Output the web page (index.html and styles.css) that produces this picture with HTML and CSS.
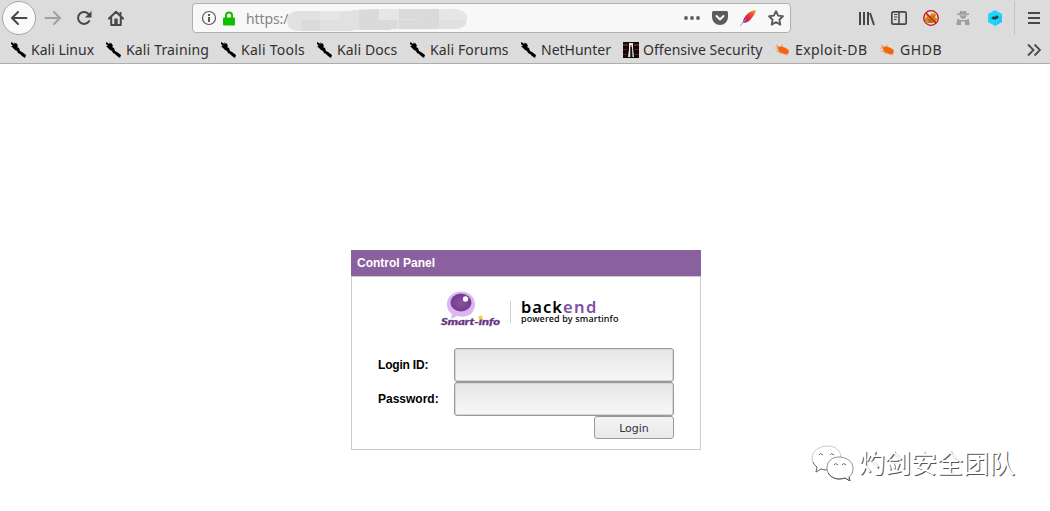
FILE: index.html
```html
<!DOCTYPE html>
<html lang="en">
<head>
<meta charset="utf-8">
<title>Control Panel</title>
<link rel="stylesheet" href="styles.css">
</head>
<body>
<svg class="defs" width="0" height="0">
  <symbol id="kali" viewBox="0 0 16 16"><path d="M1 0 3 1 4 2 7 2 8 4 7 5 9 6 10 9 12 10 16 13 15 16 12 14 10 12 8 11 7 9 5 8 3 6 1 4 3 4 1 2Z" fill="#000"/><path d="M4 1l3 1" stroke="#000" stroke-width=".8"/></symbol>
  <symbol id="bug" viewBox="0 0 16 16"><path d="M3 4 6 5 7 4 9 5 12 6 15 9 14 12 10 12 5 10 4 7Z" fill="#f2640d"/><path d="M1 6h4M2 9l4 0M5 11l3 0M10 12l4 1M7 4l2-1M13 7l2 1M4 4 2 3" stroke="#f4894d" stroke-width=".8"/></symbol>
</svg>
<header class="browser">
  <div class="toolbar">
    <button class="back"><svg width="18" height="16" viewBox="0 0 18 16"><path d="M16.500 8H2M8 2 2 8l6 6" class="ink"/></svg></button>
    <svg class="forward" width="18" height="16" viewBox="0 0 18 16"><path d="M1.500 8H16M10 2l6 6-6 6" class="ink faded"/></svg>
    <svg class="reload" width="16" height="16" viewBox="0 0 16 16"><path d="M13 4.500A6 6 0 1 0 13.200 11" class="ink"/><path d="M15.500 1v6.500H9Z" fill="#474747"/></svg>
    <svg class="home" width="16" height="16" viewBox="0 0 16 16"><path d="M1 8.500 8 1.700l7 6.800M3.200 8v7h9.600V8" class="ink" stroke-linejoin="round"/><path d="M6.300 15V9.500q0-1 1-1h1.400q1 0 1 1V15Z" fill="#474747"/><path d="M11.500 2h2v3.500h-2z" fill="#474747"/></svg>
    <div class="urlbar">
      <svg class="info" width="16" height="16" viewBox="0 0 16 16"><circle cx="8" cy="8" r="6.500" fill="none" stroke="#5b5b5b" stroke-width="1.200"/><path d="M7 7h2v5H7zM7 4h2v2H7z" fill="#5b5b5b"/></svg>
      <svg class="lock" width="12" height="15" viewBox="0 0 12 15"><path d="M3 8V4.500a3 3 0 0 1 6 0V8" fill="none" stroke="#12bc00" stroke-width="2"/><rect y="6.500" width="12" height="8" rx="1" fill="#12bc00"/></svg>
      <span class="scheme">https:/</span>
      <svg class="redacted" width="180" height="24" viewBox="0 0 180 24"><defs><clipPath id="blob"><path d="M11 3 64 3 64 2 100 1H165q15 0 15 10t-14 10H104v1H66v1H11Q0 22 0 13T11 3"/></clipPath></defs><g clip-path="url(#blob)"><path fill="#e1e1e1" d="M0 0h180v24H0z"/><path fill="#dadada" d="M72 0h20v12H72zM110 0h22v11h-22zM132 0h20v12h-20zM112 12h20v12h-20zM15 12h18v12H15zM72 12h38v12H72zM132 12h20v12h-20z"/><path fill="#e6e6e6" d="M92 0h20v12H92zM33 0h20v12H33zM152 0h28v12h-28z"/></g></svg>
      <svg class="dots" width="16" height="16" viewBox="0 0 16 16"><g fill="#5c5c5c"><circle cx="2" cy="8" r="1.900"/><circle cx="8" cy="8" r="1.900"/><circle cx="14" cy="8" r="1.900"/></g></svg>
      <svg width="16" height="16" viewBox="0 0 16 16"><path d="M1.500 1h13Q16 1 16 2.500V7A8 8 0 0 1 0 7V2.500Q0 1 1.500 1Z" fill="#5c5c5c"/><path d="m4.500 6 3.500 3.500L11.500 6" fill="none" stroke="#f8f8f8" stroke-width="2" stroke-linecap="round" stroke-linejoin="round"/></svg>
      <svg width="16" height="16" viewBox="0 0 16 16"><defs><linearGradient id="plume" x1="1" y1="0" x2="0" y2="1"><stop stop-color="#f9b021"/><stop offset=".3" stop-color="#ee582f"/><stop offset=".65" stop-color="#d6204b"/><stop offset="1" stop-color="#82348c"/></linearGradient></defs><path d="M16 0Q9 1 5.500 6 3 9 2.500 13 8 13 11 9L14 5Q16 2 16 0Z" fill="url(#plume)"/><path d="M0 16 6 9" stroke="#b690c5"/></svg>
      <svg width="16" height="16" viewBox="0 0 16 16"><path d="m8 1.200 2.100 4.400 4.800.7-3.500 3.400.9 4.900L8 12.200l-4.300 2.400.9-4.900L1.100 6.300l4.800-.7Z" fill="none" stroke="#5c5c5c" stroke-width="1.900" stroke-linejoin="round"/></svg>
    </div>
    <div class="tools">
      <svg width="16" height="16" viewBox="0 0 16 16"><path d="M1 2v13M5 2v13M9 2v13M11 3l4 12" fill="none" stroke="#474747" stroke-width="2"/></svg>
      <svg width="16" height="16" viewBox="0 0 16 16"><rect x=".8" y="1.800" width="14.400" height="12.400" rx="1.700" fill="none" stroke="#474747" stroke-width="1.700"/><path d="M8 2v12" stroke="#474747" stroke-width="1.500"/><path d="M3 4.500h3.500M3 7h3.500M3 9.500h2.500" stroke="#474747"/></svg>
      <svg width="16" height="16" viewBox="0 0 16 16"><path d="M3 5 5 4l1 2 2-1V3l2 1 2-1 1 2-1 2 2 2-1 3-3 1H5L2 11V8l2-1Z" fill="#d98313"/><path d="m5 9 2 2 1-2m2-3 1 1M5 12h5" fill="none" stroke="#784b18" stroke-width=".7"/><circle cx="8" cy="8" r="7.300" fill="none" stroke="#c70e18" stroke-width="1.300"/><path d="m3 3 10 10" stroke="#c70e18" stroke-width="1.300"/></svg>
      <svg width="16" height="16" viewBox="0 0 16 16"><path d="M5 1h2l1 .7L9 1h2l.5 2.500H14V5h-2.500q0 3-3.500 4-3-1-3.500-4H2V3.500h2.500ZM2 9l4 1v2H2ZM14 9l-4 1v2h4ZM1.500 12H6V15H1.500ZM10 12h4.500V15H10ZM6 10h4v1.500H6Z" fill="#9e9e9e"/><path d="M5.500 5h5" stroke="#dcdcdc" stroke-width=".8"/></svg>
      <svg width="16" height="16" viewBox="0 0 16 16"><path d="m8 0 7 4v8l-7 4-7-4V4Z" fill="#1fd6f8"/><path d="m15 4-7 12 7-4Z" fill="#1cbdf4" opacity=".5"/><path d="M4 8 7 6v1l2-1V5l3 2-2 2H9v1L7 9v1Z" fill="#29434c"/></svg>
      <i class="divider"></i>
      <svg width="12" height="14" viewBox="0 0 12 14"><path d="M0 2h12M0 7h12M0 12h12" stroke="#474747" stroke-width="2"/></svg>
    </div>
  </div>
  <nav class="bookmarks">
    <a class="mark linux"><svg><use href="#kali"/></svg><span>Kali Linux</span></a>
    <a class="mark training"><svg><use href="#kali"/></svg><span>Kali Training</span></a>
    <a class="mark ktools"><svg><use href="#kali"/></svg><span>Kali Tools</span></a>
    <a class="mark docs"><svg><use href="#kali"/></svg><span>Kali Docs</span></a>
    <a class="mark forums"><svg><use href="#kali"/></svg><span>Kali Forums</span></a>
    <a class="mark hunter"><svg><use href="#kali"/></svg><span>NetHunter</span></a>
    <a class="mark offensive"><svg viewBox="0 0 16 16"><path d="M0 0h16v16H0z" fill="#160808"/><path d="M0 2h5v2H0zM11 2h5v2h-5zM0 7h4v1H0zM12 7h4v1h-4zM0 12h4v1H0zM12 12h4v1h-4z" fill="#542626"/><path d="M6 1h4v5l1 9H9.500L9 5H7.500v10H5l1-8Z" fill="#e8e8e8"/><path d="M7.500 3h1v12h-1z" fill="#222"/></svg><span>Offensive Security</span></a>
    <a class="mark exploit"><svg><use href="#bug"/></svg><span>Exploit-DB</span></a>
    <a class="mark ghdb"><svg><use href="#bug"/></svg><span>GHDB</span></a>
    <svg class="more" width="14" height="14" viewBox="0 0 14 14"><path d="m1 1.500 5.500 5.500L1 12.500M7.500 1.500 13 7l-5.500 5.500" fill="none" stroke="#4c4c4c" stroke-width="1.900"/></svg>
  </nav>
</header>
<main>
  <section class="panel">
    <h1>Control Panel</h1>
    <form class="content" onsubmit="return false">
      <div class="brand">
        <svg class="logo" width="62" height="38" viewBox="0 0 62 38"><defs><radialGradient id="eye"><stop stop-color="#8c51a0"/><stop offset="1" stop-color="#713d8b"/></radialGradient></defs><path d="M21 .5C13 .5 7 6 7 13c0 5 2 8 5 10l-1 5 6-3c11 3 18-3 18-12C35 6 29 .5 21 .5Z" fill="#dcb5f4"/><ellipse cx="21" cy="11.500" rx="10.500" ry="9" fill="url(#eye)"/><circle cx="25.500" cy="8" r="2.700" fill="#fff"/><text x="1" y="34" textLength="59" lengthAdjust="spacingAndGlyphs">Smart-info</text><circle cx="40.500" cy="26.500" r="2" fill="#f5d51d"/></svg>
        <i class="rule"></i>
        <div class="wordmark"><strong>back<em>end</em></strong><span>powered by smartinfo</span></div>
      </div>
      <label class="field"><span class="id">Login ID:</span><input type="text"></label>
      <label class="field"><span>Password:</span><input type="password"></label>
      <button class="login">Login</button>
    </form>
  </section>
  <div class="watermark">
    <svg width="44" height="38" viewBox="0 0 44 38"><g fill="#fff" stroke="#777" stroke-width=".8"><path d="M17 3C8 3 1 8 1 15c0 4 2 7 5 9l-1 5 5-3q5 2 11 0c6-1 9-5 9-11C30 8 25 3 17 3Z" stroke="#bbb"/><path d="M2 19q1 3 4 5l-1 5 5-3q3 1 6 1" fill="none" stroke="#555"/><path d="M28 14c-8 0-12 5-12 11s5 11 12 11q3 0 6-1l5 3-1-4c3-2 4-5 4-9 0-6-6-11-14-11Z"/><path d="M8 12q1-3 4 0M19 12q1-3 4 0M23 22q1-3 4 0M31 22q1-3 4 0M17 30q4 6 11 6 3 0 6-1l5 3-1-4" fill="none" stroke="#444"/></g></svg>
    <span>灼剑安全团队</span>
  </div>
</main>
</body>
</html>
```

FILE: styles.css
```css
* { box-sizing: border-box; }
body { margin: 0; width: 1050px; height: 511px; overflow: hidden; background: #fff; font-family: "Noto Sans", sans-serif; }
svg { display: block; flex: none; }
.defs { position: absolute; }
.browser { height: 64px; background: #dcdcdc; border-bottom: 1px solid #adadad; }
.toolbar { display: flex; align-items: center; height: 36px; padding-left: 2px; }
.ink { fill: none; stroke: #474747; stroke-width: 2; stroke-linecap: round; }
.faded { stroke: #a0a0a0; }
.back { display: grid; place-items: center; width: 34px; height: 34px; padding: 0; border: 1px solid #a5a5a5; border-radius: 50%; background: #fafafa; }
.forward { margin-left: 8px; }
.reload { margin-left: 14px; }
.home { margin-left: 16px; }
.urlbar { display: flex; align-items: center; width: 599px; height: 30px; margin-left: 68px; padding: 0 6px 0 8px; gap: 12px; background: #f8f8f8; border: 1px solid #b0b0b0; border-radius: 4px; }
.lock { margin-left: -6px; }
.scheme { width: 42px; margin-left: -1px; color: #858585; font-size: 14px; letter-spacing: -.1px; }
.redacted { margin: 3px 0 0 -13px; }
.dots { margin-left: auto; }
.tools { display: flex; align-items: center; gap: 16px; margin-left: 68px; }
.divider { width: 1px; height: 34px; margin: 0 -3px 0 -5px; background: #c2c2c2; }
.bookmarks { display: flex; align-items: center; height: 27px; padding: 0 9px 0 10px; color: #303030; font-size: 14px; }
.mark { display: flex; flex: none; align-items: center; gap: 5px; white-space: nowrap; }
.mark svg { width: 16px; height: 16px; }
.linux { width: 95px; }
.training { width: 115px; letter-spacing: .16px; }
.ktools { width: 96px; letter-spacing: .25px; }
.docs { width: 93px; letter-spacing: .1px; }
.forums { width: 111px; letter-spacing: .12px; }
.hunter { width: 103px; }
.offensive { width: 151px; gap: 4px; letter-spacing: .05px; }
.exploit { width: 105px; letter-spacing: .4px; }
.ghdb { letter-spacing: .6px; }
.more { margin-left: auto; }
main { position: relative; height: 447px; padding: 186px 0 0 351px; }
.panel { width: 350px; height: 200px; font-family: "Liberation Sans", Arial, sans-serif; }
.panel h1 { height: 26px; margin: 0; padding-left: 6px; background: #8b609f; color: #fff; font-size: 12px; line-height: 26px; }
.content { display: flex; flex-direction: column; height: 174px; padding: 0 26px; border: 1px solid #ccc; }
.brand { display: flex; height: 71px; padding: 14px 0 0 62px; }
.logo text { fill: #69347f; stroke: #69347f; stroke-width: .3px; font: italic 900 10px Lato, sans-serif; }
.rule { width: 1px; height: 22px; margin: 10px 10px 0 8px; background: #d0d0d0; }
.wordmark { display: flex; flex-direction: column; padding-top: 8px; font-family: "Noto Sans", sans-serif; white-space: nowrap; }
.wordmark strong { height: 15px; font-size: 16.5px; font-weight: 600; line-height: 15px; letter-spacing: 1px; color: #000; }
.wordmark em { color: #8050a0; font-style: normal; font-weight: 600; letter-spacing: 1.4px; }
.wordmark span { color: #000; font-size: 9px; font-weight: 500; line-height: 10px; letter-spacing: .15px; }
.field { display: flex; align-items: center; height: 34px; }
.field span { width: 76px; font-size: 12px; font-weight: bold; color: #000; }
.field .id { letter-spacing: -.2px; }
.field input { width: 220px; height: 34px; border: 1px solid #999; border-radius: 3px; background: linear-gradient(#e6e6e6, #f7f7f7); box-shadow: inset 0 0 0 1px #d7d7d7; }
.login { align-self: flex-end; width: 80px; height: 23px; padding: 1px 0 0; border: 1px solid #999; border-radius: 3px; background: linear-gradient(#f4f4f4, #e9e9e9); color: #333; font: 11px "DejaVu Sans", sans-serif; }
.watermark { position: absolute; left: 811px; top: 379px; display: flex; align-items: center; gap: 4px; color: #fff; font: 26px/36px "Noto Sans CJK SC", sans-serif; text-shadow: 1px 1px 0 #555; }
```
